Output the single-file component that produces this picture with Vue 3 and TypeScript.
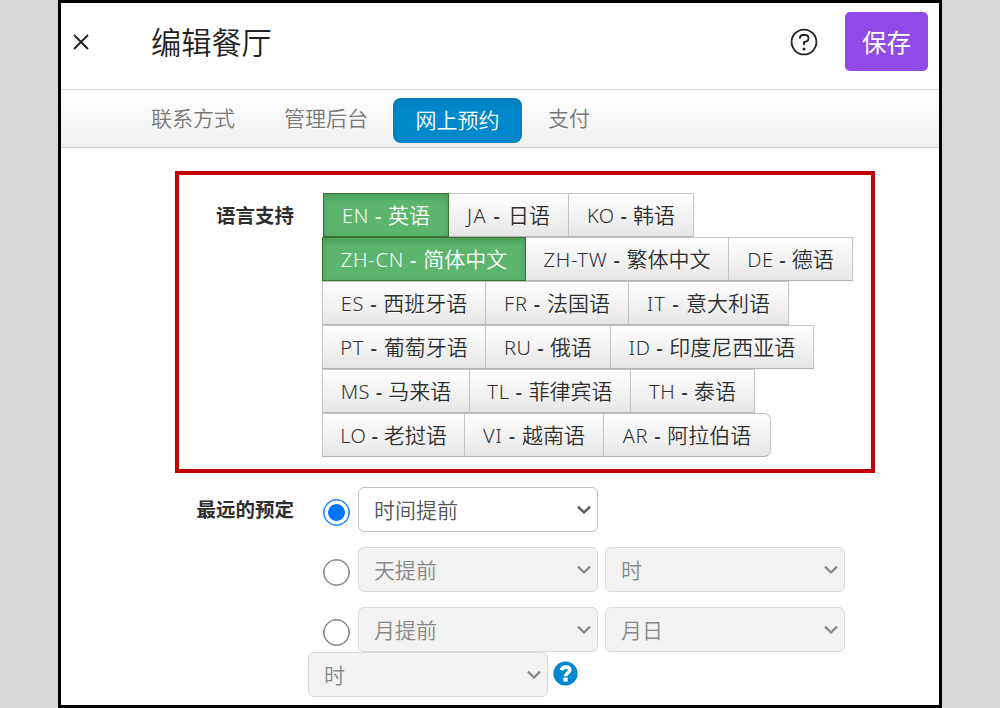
<script setup lang="ts">
interface Language { code: string; name: string; width: number; tracking: number; active?: boolean }

const tabs: string[] = ['联系方式', '管理后台', '网上预约', '支付']
const activeTab = '网上预约'

const languageRows: Language[][] = [
  [
    { code: 'EN', name: '英语', width: 126, tracking: 0.7, active: true },
    { code: 'JA', name: '日语', width: 121, tracking: 1.4 },
    { code: 'KO', name: '韩语', width: 126, tracking: 0.5 },
  ],
  [
    { code: 'ZH-CN', name: '简体中文', width: 204, tracking: 0.75, active: true },
    { code: 'ZH-TW', name: '繁体中文', width: 204, tracking: 0.75 },
    { code: 'DE', name: '德语', width: 125, tracking: 0.5 },
  ],
  [
    { code: 'ES', name: '西班牙语', width: 164, tracking: 0.7 },
    { code: 'FR', name: '法国语', width: 144, tracking: 0.8 },
    { code: 'IT', name: '意大利语', width: 161, tracking: 1.1 },
  ],
  [
    { code: 'PT', name: '葡萄牙语', width: 164, tracking: 0.9 },
    { code: 'RU', name: '俄语', width: 126, tracking: 0.5 },
    { code: 'ID', name: '印度尼西亚语', width: 204, tracking: 0.6 },
  ],
  [
    { code: 'MS', name: '马来语', width: 148, tracking: 0.5 },
    { code: 'TL', name: '菲律宾语', width: 162, tracking: 0.7 },
    { code: 'TH', name: '泰语', width: 125, tracking: 0.6 },
  ],
  [
    { code: 'LO', name: '老挝语', width: 143, tracking: 0.3 },
    { code: 'VI', name: '越南语', width: 140, tracking: 0.9 },
    { code: 'AR', name: '阿拉伯语', width: 168, tracking: 0.7 },
  ],
]

const limitRows: { selected: boolean; fields: string[] }[] = [
  { selected: true, fields: ['时间提前'] },
  { selected: false, fields: ['天提前', '时'] },
  { selected: false, fields: ['月提前', '月日'] },
]
</script>

<template>
  <div class="window">
    <header class="header">
      <svg class="close" width="16" height="16" viewBox="0 0 16 16">
        <path d="M1 1L15 15M15 1L1 15" />
      </svg>
      <h1>编辑餐厅</h1>
      <svg class="help" width="28" height="28" viewBox="0 0 28 28">
        <circle cx="14" cy="14" r="12.4" />
        <path d="M9.9 10.7V10.2C9.9 8.3 11.3 7 13.2 7H15C17 7 18.5 8.4 18.5 10.3C18.5 13 16.6 13.9 14 14V17" />
        <circle class="dot" cx="14" cy="21" r="1.5" />
      </svg>
      <button class="save">保存</button>
    </header>
    <nav class="tabs">
      <span v-for="tab in tabs" :key="tab" class="tab" :class="{ active: tab === activeTab }">{{ tab }}</span>
    </nav>
    <main>
      <section class="languages">
        <div class="label">语言支持</div>
        <div class="groups">
          <div v-for="(row, index) in languageRows" :key="index" class="lang-row">
            <button
              v-for="item in row"
              :key="item.code"
              class="lang"
              :class="{ active: item.active }"
              :style="{ width: item.width + 'px' }"
            ><span class="code" :style="{ letterSpacing: item.tracking + 'px' }">{{ item.code + ' ' }}<span class="dash">{{ '- ' }}</span></span>{{ item.name }}</button>
          </div>
        </div>
      </section>
      <section class="limits">
        <div class="label">最远的预定</div>
        <div class="limit-rows">
          <div v-for="row in limitRows" :key="row.fields[0]" class="limit-row">
            <span class="radio" :class="{ on: row.selected }"></span>
            <div v-for="field in row.fields" :key="field" class="select" :class="{ disabled: !row.selected }">
              <span>{{ field }}</span>
              <svg width="14" height="10" viewBox="0 0 14 10"><path d="M1 1.7L7 7.5L13 1.7" /></svg>
            </div>
          </div>
          <div class="limit-tail">
            <div class="select disabled">
              <span>时</span>
              <svg width="14" height="10" viewBox="0 0 14 10"><path d="M1 1.7L7 7.5L13 1.7" /></svg>
            </div>
            <svg class="info" width="25" height="25" viewBox="0 0 25 25">
              <circle cx="12.5" cy="12.5" r="12.1" />
              <path d="M8.2 9.2C9 7.1 10.6 6.1 12.8 6.1C15.2 6.1 16.8 7.3 16.8 9.2C16.8 11.8 12.6 12 12.6 15.2" />
              <rect x="10.4" y="16.6" width="4.3" height="4" />
            </svg>
          </div>
        </div>
      </section>
    </main>
  </div>
</template>

<style>
body { margin: 0; background: #d7d7d7; }
</style>

<style scoped>
* { box-sizing: border-box; }
.window {
  width: 884px;
  height: 708px;
  margin-left: 58px;
  border: 3px solid #000;
  background: #fff;
  overflow: hidden;
  color: #2e2e2e;
  font-family: "Noto Sans CJK SC", sans-serif;
  font-weight: 350;
  font-size: 21px;
}
button { font: inherit; padding: 0; margin: 0; }
svg { flex: none; display: block; }
.header {
  height: 87px;
  border-bottom: 1px solid #ddd;
  padding: 9px 11px 0 12px;
  display: flex;
  align-items: flex-start;
}
.close { margin-top: 22px; fill: none; stroke: #222; stroke-width: 1.9; }
h1 { margin: 7px 0 0 62px; font-size: 30.2px; line-height: 44px; font-weight: 350; flex: 1; color: #222; }
.help { margin: 16px 27px 0 0; fill: none; stroke: #222; stroke-width: 1.8; }
.help .dot { fill: #222; stroke: none; }
.save {
  width: 83px;
  height: 59px;
  border: 0;
  border-radius: 5px;
  background: #8f4ae7;
  color: #fff;
  font-size: 24.5px;
  font-weight: 400;
  line-height: 59px;
}
.tabs {
  height: 58px;
  border-bottom: 1px solid #ccc;
  background: linear-gradient(#fff, #f0f0f0);
  padding: 8px 0 0 90px;
  display: flex;
  color: #777;
  text-shadow: 0 1px 0 #fff;
}
.tab { line-height: 38px; margin-right: 49px; }
.tab:nth-child(2) { margin-right: 25px; }
.tab.active {
  width: 129px;
  height: 45px;
  line-height: 43px;
  margin-right: 26px;
  text-align: center;
  border-radius: 8px;
  background: #0088cc;
  color: #fff;
  text-shadow: none;
  box-shadow: inset 0 3px 8px rgba(0, 0, 0, 0.13);
}
.languages {
  width: 700px;
  height: 302px;
  margin: 23px 0 0 114px;
  border: 4px solid #c00000;
  padding: 18px 0 0;
  display: flex;
}
.label { font-size: 19.5px; font-weight: 700; line-height: 44px; text-align: right; width: 115px; }
.groups { margin-left: 28px; }
.lang-row { display: flex; height: 44px; }
.lang-row:first-child { padding-left: 1px; }
.lang {
  height: 44px;
  border: 1px solid #c5c5c5;
  border-bottom-color: #b3b3b3;
  background: linear-gradient(#fff, #e6e6e6);
  color: #2e2e2e;
  line-height: 41px;
  white-space: nowrap;
  position: relative;
  text-shadow: 0 1px 1px rgba(255, 255, 255, 0.75);
  box-shadow: inset 0 1px 0 rgba(255, 255, 255, 0.2), 0 1px 2px rgba(0, 0, 0, 0.05);
}
.lang + .lang { margin-left: -1px; }
.lang.active {
  z-index: 1;
  border-color: #38752f;
  background: #5bb56d;
  color: #fff;
  text-shadow: none;
  box-shadow: inset 0 3px 6px rgba(0, 0, 0, 0.16);
}
.lang-row:last-child .lang:last-child { border-radius: 0 7px 7px 0; }
.code { font-family: "Noto Sans", sans-serif; font-size: 20px; white-space: pre; }
.dash { font-weight: 500; }
.limits { display: flex; margin-top: 14px; }
.limits .label { width: 233px; line-height: 44px; }
.limit-rows { width: 600px; margin-left: 14px; }
.limit-row { display: flex; height: 45px; margin-bottom: 15px; padding-left: 15px; }
.limit-row:nth-child(3) { margin-bottom: 0; }
.radio { width: 27px; height: 27px; flex: none; margin: 12px 8px 0 0; border: 1px solid #767676; box-shadow: inset 0 0 0 0.6px #767676; border-radius: 50%; }
.radio.on { border-color: #0075ff; box-shadow: inset 0 0 0 0.6px #0075ff; background: radial-gradient(circle, #0075ff 0 8px, #fff 8.7px); }
.select {
  width: 240px;
  height: 45px;
  flex: none;
  margin-right: 7px;
  border: 1px solid #c5c5c5;
  border-radius: 6px;
  background: #fff;
  color: #555;
  padding: 0 6px 0 15px;
  display: flex;
  justify-content: space-between;
  line-height: 43px;
}
.select svg { margin-top: 17px; fill: none; stroke: #555; stroke-width: 2.3; }
.select.disabled { border-color: #dadada; background: #f2f2f2; color: #888; }
.disabled svg { stroke: #888; }
.limit-tail { display: flex; }
.info { margin: 8.5px 0 0 -2px; fill: #0088cc; }
.info path { fill: none; stroke: #fff; stroke-width: 3.6; }
.info rect { fill: #fff; }
</style>
